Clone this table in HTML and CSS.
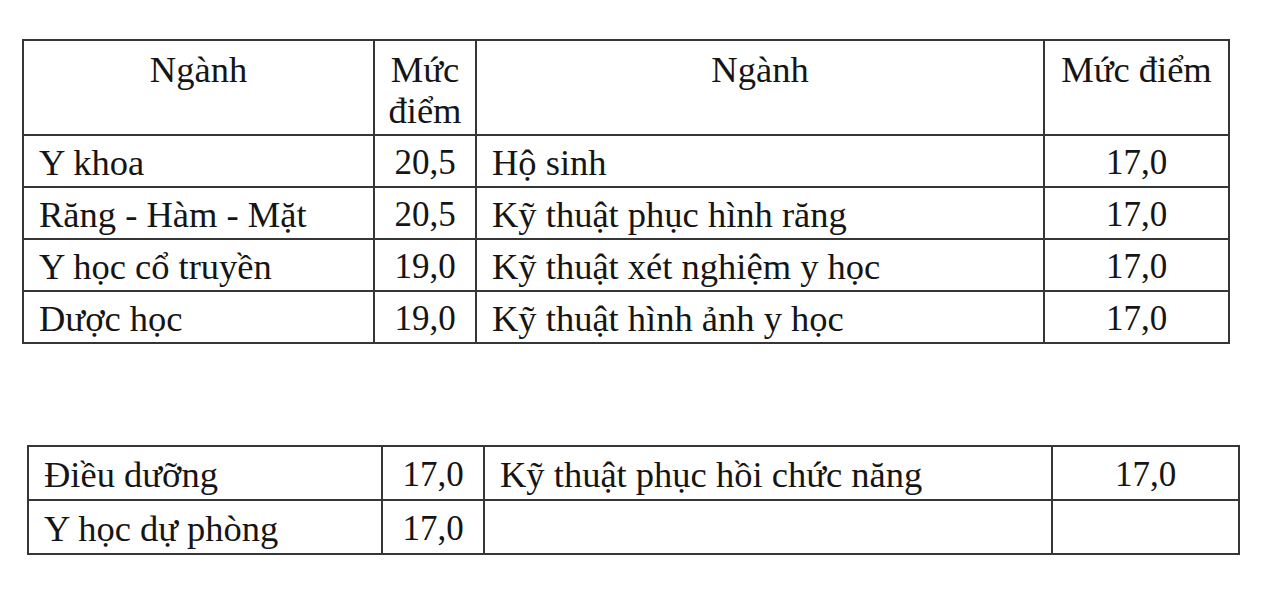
FILE: index.html
```html
<!DOCTYPE html>
<html>
<head>
<meta charset="utf-8">
<link rel="stylesheet" href="styles.css">
</head>
<body>
<div class="page">
  <table class="grid grid-top">
    <colgroup>
      <col class="c-name"><col class="c-score"><col class="c-name2"><col class="c-score2">
    </colgroup>
    <tr class="head">
      <td class="hd">Ngành</td>
      <td class="hd">Mức điểm</td>
      <td class="hd">Ngành</td>
      <td class="hd">Mức điểm</td>
    </tr>
    <tr class="row">
      <td class="txt">Y khoa</td><td class="num">20,5</td>
      <td class="txt">Hộ sinh</td><td class="num">17,0</td>
    </tr>
    <tr class="row">
      <td class="txt">Răng - Hàm - Mặt</td><td class="num">20,5</td>
      <td class="txt">Kỹ thuật phục hình răng</td><td class="num">17,0</td>
    </tr>
    <tr class="row">
      <td class="txt">Y học cổ truyền</td><td class="num">19,0</td>
      <td class="txt">Kỹ thuật xét nghiệm y học</td><td class="num">17,0</td>
    </tr>
    <tr class="row">
      <td class="txt">Dược học</td><td class="num">19,0</td>
      <td class="txt">Kỹ thuật hình ảnh y học</td><td class="num">17,0</td>
    </tr>
  </table>

  <table class="grid grid-bottom">
    <colgroup>
      <col class="d-name"><col class="d-score"><col class="d-name2"><col class="d-score2">
    </colgroup>
    <tr class="row2">
      <td class="txt">Điều dưỡng</td><td class="num">17,0</td>
      <td class="txt">Kỹ thuật phục hồi chức năng</td><td class="num">17,0</td>
    </tr>
    <tr class="row2">
      <td class="txt">Y học dự phòng</td><td class="num">17,0</td>
      <td class="txt"></td><td class="num"></td>
    </tr>
  </table>
</div>
</body>
</html>
```

FILE: styles.css
```css
body {
  margin: 0;
  font-family: "Liberation Serif", serif;
  font-size: 34px;
  line-height: 41px;
  color: #151515;
  background: #ffffff;
}

.page {
  padding-top: 39px;
}

.grid {
  border-collapse: collapse;
  table-layout: fixed;
  font-size: 34px;
  line-height: 41px;
}

.grid td {
  border: 2px solid #363636;
  vertical-align: top;
  padding: 0;
}

.grid-top {
  width: 1206px;
  margin-left: 22px;
}

.c-name { width: 351px; }
.c-score { width: 102px; }
.c-name2 { width: 568px; }
.c-score2 { width: 185px; }

.grid-bottom {
  width: 1211px;
  margin-left: 27px;
  margin-top: 101px;
}

.d-name { width: 354px; }
.d-score { width: 102px; }
.d-name2 { width: 568px; }
.d-score2 { width: 187px; }

.head { height: 95px; }
.grid td.hd {
  text-align: center;
  font-size: 36.5px;
  padding: 8px 4px 0;
}

.row { height: 52px; }
.row2 { height: 54px; }

.grid td.txt {
  text-align: left;
  font-size: 36.5px;
  padding: 6px 0 0 15px;
  white-space: nowrap;
}

.grid td.num {
  text-align: center;
  font-size: 35px;
  padding-top: 6px;
  white-space: nowrap;
}

.row2 td.txt,
.row2 td.num {
  padding-top: 7px;
}
```
